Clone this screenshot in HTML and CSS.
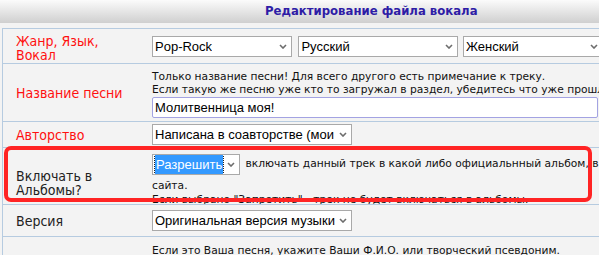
FILE: index.html
```html
<!DOCTYPE html>
<html lang="ru">
<head>
<meta charset="UTF-8">
<meta name="viewport" content="width=device-width, initial-scale=1.0">
<title>Редактирование файла вокала</title>
<link rel="stylesheet" href="styles.css">
</head>
<body>

<div class="header">
    <h1 class="title">Редактирование файла вокала</h1>
</div>

<div class="form">
    <div class="row row-genre">
        <div class="label red">Жанр, Язык,<br>Вокал</div>
        <div class="field">
            <span class="select sel-genre"><span class="sel-text">Pop-Rock</span><svg class="arrow" width="8" height="5" viewBox="0 0 8 5"><path d="M1 1 L4 4 L7 1" fill="none" stroke="#6d6d6d" stroke-width="1.6"/></svg></span>
            <span class="select sel-lang"><span class="sel-text">Русский</span><svg class="arrow" width="8" height="5" viewBox="0 0 8 5"><path d="M1 1 L4 4 L7 1" fill="none" stroke="#6d6d6d" stroke-width="1.6"/></svg></span>
            <span class="select sel-voice"><span class="sel-text">Женский</span><svg class="arrow" width="8" height="5" viewBox="0 0 8 5"><path d="M1 1 L4 4 L7 1" fill="none" stroke="#6d6d6d" stroke-width="1.6"/></svg></span>
        </div>
    </div>

    <div class="row row-name">
        <div class="label red">Название песни</div>
        <div class="field">
            <div class="note">Только название песни! Для всего другого есть примечание к треку.</div>
            <div class="note">Если такую же песню уже кто то загружал в раздел, убедитесь что уже прошло</div>
            <input type="text" class="text-input" value="Молитвенница моя!">
        </div>
    </div>

    <div class="row row-author">
        <div class="label red">Авторство</div>
        <div class="field">
            <span class="select sel-wide"><span class="sel-text">Написана в соавторстве (мои</span><svg class="arrow" width="8" height="5" viewBox="0 0 8 5"><path d="M1 1 L4 4 L7 1" fill="none" stroke="#6d6d6d" stroke-width="1.6"/></svg></span>
        </div>
    </div>

    <div class="row row-albums">
        <div class="label">Включать в<br>Альбомы?</div>
        <div class="field clipped">
            <div class="note first-line"><span class="select sel-allow"><span class="sel-text picked">Разрешить</span><svg class="arrow" width="8" height="5" viewBox="0 0 8 5"><path d="M1 1 L4 4 L7 1" fill="none" stroke="#6d6d6d" stroke-width="1.6"/></svg></span> включать данный трек в какой либо официальнный альбом, в рамках</div>
            <div class="note next-line">сайта.</div>
            <div class="note next-line">Если выбрано "Запретить" - трек не будет включаться в альбомы.</div>
        </div>
        <div class="mark"></div>
    </div>

    <div class="row row-version">
        <div class="label">Версия</div>
        <div class="field">
            <span class="select sel-wide"><span class="sel-text">Оригинальная версия музыки</span><svg class="arrow" width="8" height="5" viewBox="0 0 8 5"><path d="M1 1 L4 4 L7 1" fill="none" stroke="#6d6d6d" stroke-width="1.6"/></svg></span>
        </div>
    </div>

    <div class="row row-last">
        <div class="label"></div>
        <div class="field">
            <div class="note">Если это Ваша песня, укажите Ваши Ф.И.О. или творческий псевдоним.</div>
        </div>
    </div>
</div>

</body>
</html>
```

FILE: styles.css
```css
body {
    margin: 0;
    background-color: #f3f3f3;
    font-family: "Liberation Sans", Arial, sans-serif;
    overflow: hidden;
}
.header {
    height: 23px;
    background: linear-gradient(#fbfbfb, #cfcfcf);
    padding-left: 265px;
}
.title {
    margin: 0;
    font-family: "DejaVu Sans", Verdana, sans-serif;
    font-size: 11.7px;
    font-weight: bold;
    line-height: 23px;
    color: #2e1ca6;
    white-space: nowrap;
}
.form {
    margin: 5px 0 0 2px;
    width: 640px;
    border-top: 1px solid #b6cbe0;
    border-left: 1px solid #b6cbe0;
}
.row {
    display: grid;
    grid-template-columns: 143px 1fr;
    border-bottom: 1px solid #b6cbe0;
    position: relative;
}
.label {
    display: flex;
    align-items: center;
    padding-left: 13px;
    font-family: "DejaVu Sans Condensed", Tahoma, sans-serif;
    font-size: 14px;
    line-height: 14px;
    color: #222;
}
.red {
    color: #ff1010;
}
.field {
    padding-left: 6px;
}
.note {
    font-family: "DejaVu Sans", Verdana, sans-serif;
    font-size: 10.7px;
    line-height: 13px;
    color: #111;
    white-space: nowrap;
}

/* select boxes */
.select {
    display: inline-flex;
    align-items: center;
    justify-content: space-between;
    box-sizing: border-box;
    height: 21px;
    padding: 0 4px 0 2px;
    border: 1px solid #a9a9a9;
    background-color: #fff;
    font-family: "Liberation Sans", Arial, sans-serif;
    font-size: 13px;
    color: #000;
    vertical-align: middle;
    overflow: hidden;
}
.sel-text {
    white-space: nowrap;
    overflow: hidden;
}
.arrow {
    flex-shrink: 0;
    margin-left: 4px;
}
.sel-genre { width: 140px; }
.sel-lang { width: 160px; margin-left: 2px; }
.sel-voice { width: 140px; }
.sel-wide { width: 200px; }
.sel-allow { width: 88px; margin-right: 2px; }
.picked {
    background-color: #3399ff;
    color: #fff;
    outline: 1px dotted #222;
    padding: 1px 1px;
}

.text-input {
    display: block;
    box-sizing: border-box;
    width: 446px;
    height: 21px;
    margin-top: 1px;
    padding: 0 2px;
    border: 1px solid #a3a3e2;
    border-radius: 2px;
    background-color: #fff;
    font-family: "Liberation Sans", Arial, sans-serif;
    font-size: 13px;
}

/* row sizes */
.row-genre { height: 34px; }
.row-genre .field { padding-top: 7px; }
.row-genre .label { padding-top: 3px; }
.row-name { height: 57px; }
.row-name .field { padding-top: 6px; }
.row-author { height: 25px; }
.row-author .field { padding-top: 2px; }
.row-albums { height: 56px; }
.row-albums .label { padding-top: 14px; }
.clipped {
    padding-top: 5px;
    overflow: hidden;
}
.first-line {
    height: 26px;
    line-height: 21px;
}
.next-line {
    line-height: 14px;
}
.row-version { height: 31px; }
.row-version .field { padding-top: 5px; }
.row-last { height: 30px; }
.row-last .field { padding-top: 7px; }

/* red highlight frame */
.mark {
    position: absolute;
    left: 1px;
    top: -2px;
    width: 580px;
    height: 48px;
    border: 4px solid #ff2424;
    border-radius: 7px;
}
```
